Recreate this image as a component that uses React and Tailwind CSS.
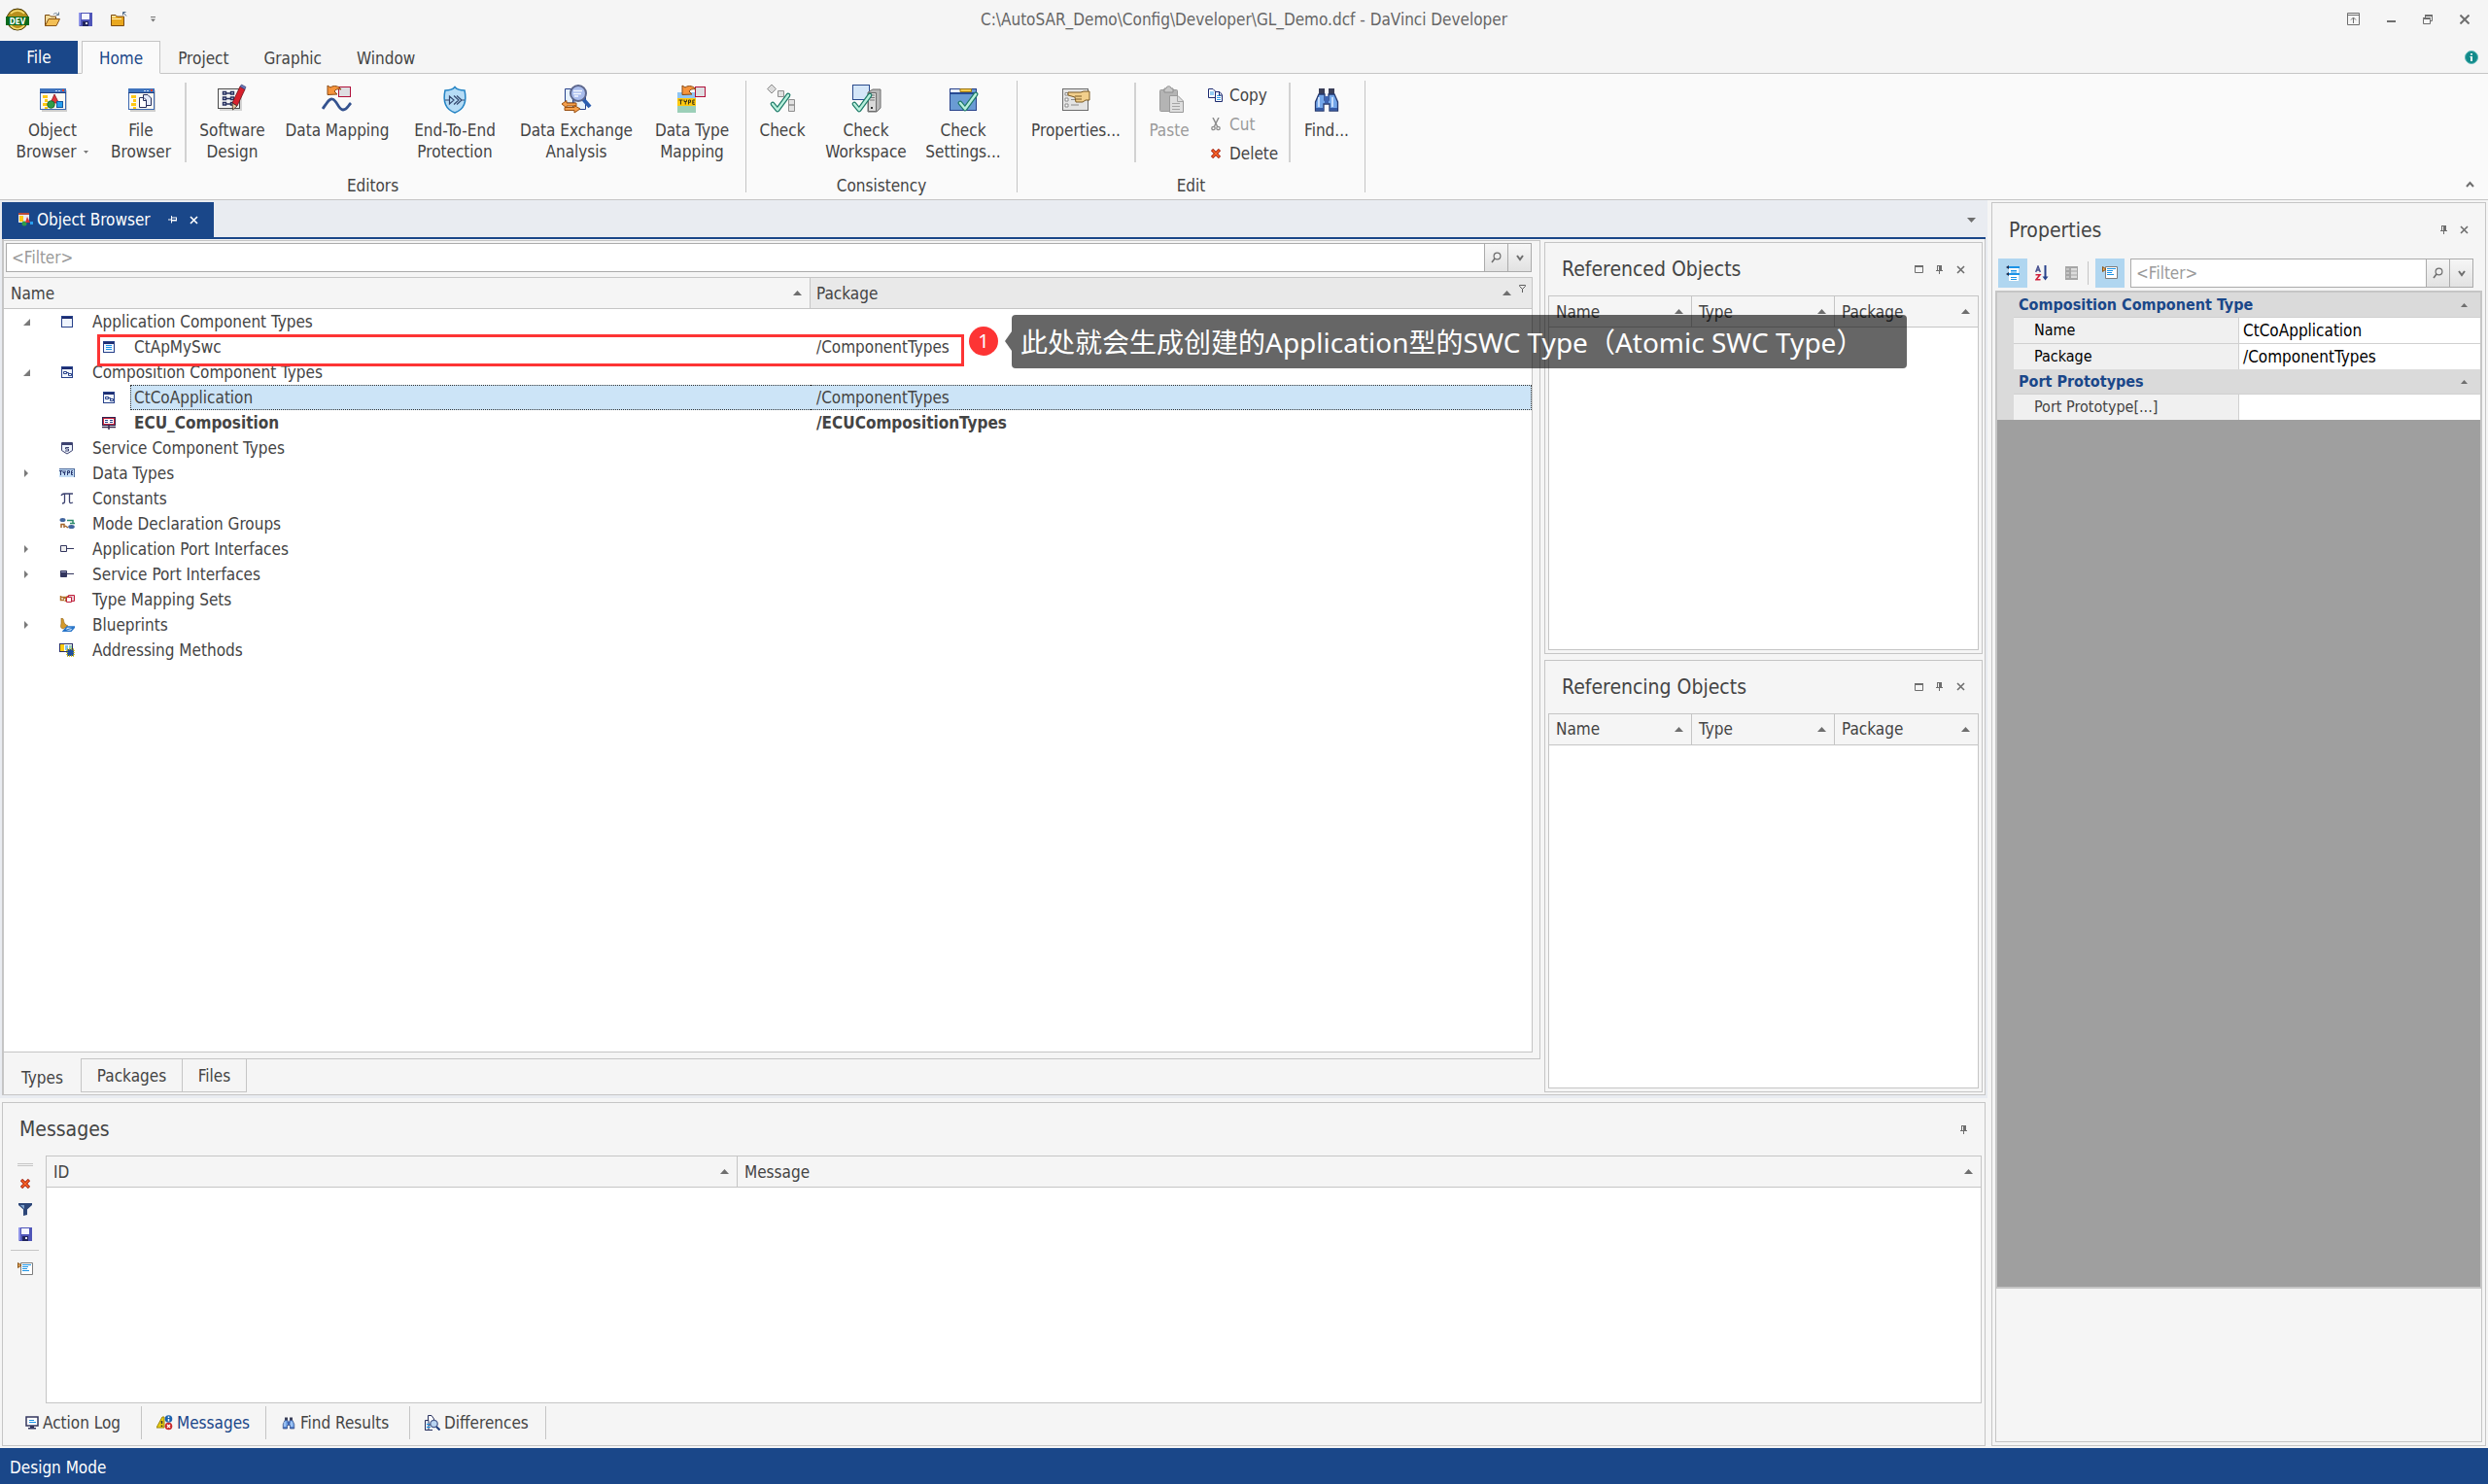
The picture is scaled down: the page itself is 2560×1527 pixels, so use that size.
import React, { useState } from 'react';

const RIBBON_TABS = ['Home', 'Project', 'Graphic', 'Window'];

const TREE = [
  { id: 'app', label: 'Application Component Types', icon: 'app', level: 0, state: 'open' },
  { id: 'swc', label: 'CtApMySwc', pkg: '/ComponentTypes', icon: 'swc', level: 1 },
  { id: 'comp', label: 'Composition Component Types', icon: 'comp', level: 0, state: 'open' },
  { id: 'ctco', label: 'CtCoApplication', pkg: '/ComponentTypes', icon: 'comp', level: 1 },
  { id: 'ecu', label: 'ECU_Composition', pkg: '/ECUCompositionTypes', icon: 'ecu', level: 1, bold: true },
  { id: 'svc', label: 'Service Component Types', icon: 'service', level: 0 },
  { id: 'data', label: 'Data Types', icon: 'type', level: 0, state: 'closed' },
  { id: 'const', label: 'Constants', icon: 'pi', level: 0 },
  { id: 'mode', label: 'Mode Declaration Groups', icon: 'mode', level: 0 },
  { id: 'aport', label: 'Application Port Interfaces', icon: 'portApp', level: 0, state: 'closed' },
  { id: 'sport', label: 'Service Port Interfaces', icon: 'portSvc', level: 0, state: 'closed' },
  { id: 'map', label: 'Type Mapping Sets', icon: 'mapping', level: 0 },
  { id: 'blue', label: 'Blueprints', icon: 'blueprint', level: 0, state: 'closed' },
  { id: 'addr', label: 'Addressing Methods', icon: 'address', level: 0 },
];

/* ---------- small glyphs ---------- */

const SortArrow = () => (
  <svg className="h-[5px] w-[9px] shrink-0" viewBox="0 0 9 5"><path d="M0 5L4.5 0L9 5Z" fill="#6e6e6e" /></svg>
);

const DownArrow = () => (
  <svg className="h-[5px] w-[9px] shrink-0" viewBox="0 0 9 5"><path d="M0 0L4.5 5L9 0Z" fill="#6e6e6e" /></svg>
);

const Pin = () => (
  <svg className="h-[9px] w-[8px]" viewBox="0 0 8 9" fill="#6e6e6e"><path d="M1 0H6V5H7V6H4V9H3V6H0V5H1ZM2 1V5H3V1Z" fillRule="evenodd" /></svg>
);

const Cross = ({ color = '#6e6e6e' }) => (
  <svg className="h-[9px] w-[9px]" viewBox="0 0 9 9"><path d="M1 1L8 8M8 1L1 8" stroke={color} strokeWidth="1.6" /></svg>
);

const Maximize = () => (
  <svg className="h-[8px] w-[9px]" viewBox="0 0 9 8"><path d="M.5 1V7.5H8.5V1" fill="none" stroke="#6e6e6e" /><path d="M0 0H9V2H0Z" fill="#6e6e6e" /></svg>
);

const Search = () => (
  <svg className="h-[12px] w-[11px]" viewBox="0 0 11 12" fill="none" stroke="#6e6e6e"><circle cx="6.5" cy="4.5" r="3.4" strokeWidth="1.2" /><path d="M4 7L1 11" strokeWidth="1.6" /></svg>
);

const Chevron = () => (
  <svg className="h-[7px] w-[8px]" viewBox="0 0 8 7"><path d="M1 1L4 5L7 1" fill="none" stroke="#6e6e6e" strokeWidth="2" /></svg>
);

/* ---------- 16px icons ---------- */

const Save = () => (
  <svg className="h-[14px] w-[14px]" viewBox="0 0 14 14">
    <path d="M0 0H14V14H1L0 13Z" fill="#4f55b8" /><path d="M0 0H2V13H0Z" fill="#8f94e8" />
    <path d="M3 1H11V7H3Z" fill="#f4f6ff" /><path d="M4 9H10V14H4Z" fill="#20245c" /><path d="M7 10H9V12H7Z" fill="#e8e8f4" />
  </svg>
);

const FolderOpen = () => (
  <svg className="h-[16px] w-[18px]" viewBox="0 0 18 16">
    <path d="M1.5 14.5V3.5H6L7.5 5H12.5V8" fill="#f4dc9a" stroke="#7a4a12" />
    <path d="M1.5 14.5L5 7.5H16.5L13 14.5Z" fill="#f3bf55" stroke="#8a5518" />
    <path d="M10 3C11 1 13 1 15 3M15.5 .5V3.5H12.5" fill="none" stroke="#6b8094" />
  </svg>
);

const FolderUp = () => (
  <svg className="h-[16px] w-[18px]" viewBox="0 0 18 16">
    <path d="M1.5 14.5V3.5H6L7.5 5H14.5V14.5Z" fill="#e9a81f" stroke="#7a4a12" />
    <path d="M2 7H12V8H2Z" fill="#fff0b8" /><path d="M2 4H6V6H2Z" fill="#f9e29a" />
    <path d="M13.5 .5H16.5M13.5 .5V3.5M14 1L17 4.5" fill="none" stroke="#4f6a88" />
  </svg>
);

const Copy = () => (
  <svg className="h-[14px] w-[16px]" viewBox="0 0 16 14">
    <path d="M.5 .5H5L7.5 3V9.5H.5Z" fill="#fff" stroke="#1c2a70" /><path d="M2 4H6M2 6H6" stroke="#2b9be8" />
    <path d="M7.5 3.5H12L14.5 6.5V13.5H7.5Z" fill="#fff" stroke="#1c2a70" /><path d="M9 7.500H13M9 9.500H13M9 11.500H13" stroke="#2b9be8" /><path d="M11.500 4V7H14" fill="none" stroke="#1c2a70" />
  </svg>
);

const Cut = () => (
  <svg className="h-[14px] w-[10px]" viewBox="0 0 10 14" fill="none" stroke="#8c8c8c">
    <path d="M2 0L6.500 9M8 0L3.500 9" strokeWidth="1.5" /><circle cx="2.500" cy="11" r="1.700" strokeWidth="1.300" /><circle cx="7.500" cy="11" r="1.700" strokeWidth="1.300" />
  </svg>
);

const Delete = () => (
  <svg className="h-[10px] w-[10px]" viewBox="0 0 10 10">
    <path d="M1 1L9 9M9 1L1 9" stroke="#a01808" strokeWidth="3.200" /><path d="M1.500 1.500L8.500 8.500M8.500 1.500L1.500 8.500" stroke="#ff6a2a" strokeWidth="1.500" />
  </svg>
);

const Funnel = () => (
  <svg className="h-[13px] w-[14px]" viewBox="0 0 14 13"><path d="M0 0H14V2L9 6.500V12L5 13V6.500L0 2Z" fill="#2c4678" /><path d="M2 2H6L6 6Z" fill="#7fa3cf" /></svg>
);

const ListFilter = () => (
  <svg className="h-[14px] w-[16px]" viewBox="0 0 16 14">
    <path d="M3.500 .500H15.500V12.500H3.500Z" fill="#fff" stroke="#7d7d7d" />
    <path d="M5 2.500H14M5 4.500H11M5 6.500H10M5 8.500H12" stroke="#1b93e6" />
    <path d="M.500 .500L4 3L.500 5.500Z" fill="#e6a65a" stroke="#8a5518" />
  </svg>
);

const BlueWindow = ({ children }) => (
  <>
    <rect x=".5" y=".5" width="11" height="11" fill="#eef4fd" stroke="#27418a" />
    <path d="M1 1H11V3H1Z" fill="#1d2c70" />
    {children}
  </>
);

function TreeIcon({ name }) {
  const frame = (children) => <svg className="h-[14px] w-[16px]" viewBox="-2 -1 16 14">{children}</svg>;
  switch (name) {
    case 'app':
      return frame(<BlueWindow />);
    case 'swc':
      return frame(<BlueWindow><path d="M3 4.500H9M3 6.500H9M3 8.500H9" stroke="#1b93e6" /></BlueWindow>);
    case 'comp':
      return frame(<BlueWindow><path d="M2.500 5.500H5.500V7.500H2.500ZM7.500 7.500H10.500V9.500H7.500ZM5.500 6.500H7.500V8" fill="#fff" stroke="#27418a" /></BlueWindow>);
    case 'ecu':
      return frame(
        <>
          <rect x="-.5" y=".5" width="13" height="8" fill="#fff" stroke="#2e2450" />
          <rect x=".5" y="1.500" width="11" height="6" fill="#fff" stroke="#c8243c" />
          <path d="M2 3.500H5M7 3.500H10M2 5.500H5M7 5.500H10" stroke="#27418a" />
          <path d="M-1 10.500H13M6 9V13" stroke="#3a2a4c" strokeWidth="1.500" />
        </>
      );
    case 'service':
      return frame(
        <>
          <path d="M.5 .5H11.500V8.500L6 12L.5 8.500Z" fill="#eef4fd" stroke="#3c4270" /><path d="M1 1H11V3H1Z" fill="#3c4270" />
          <path d="M8 5.500H4.500V7H7.500V9H4" fill="none" stroke="#3c4270" />
        </>
      );
    case 'type':
      return frame(
        <>
          <rect x="-2" y="1" width="16" height="9" fill="#c3dcf5" /><path d="M13.500 1V10M-2 1.500H14" stroke="#4c6a9c" />
          <path d="M-2 3.500H1M-.5 3V8M2 3V5.500H4V3M3.500 5V8M6.500 8V3.500H8.500V5.500H6.500M12 3.500H10.500V7.500H12M10 5.500H12" fill="none" stroke="#27356e" />
        </>
      );
    case 'pi':
      return frame(<path d="M0 3C1 1 2 1 3 1H12M3.500 1V9C3.500 11 2 11 1 11M8.500 1V9C8.500 11 10 11 12 10" fill="none" stroke="#3c4270" strokeWidth="1.300" />);
    case 'mode':
      return frame(
        <>
          <ellipse cx="1.500" cy="2" rx="3" ry="2" fill="#42659e" /><ellipse cx="10.500" cy="9" rx="3.300" ry="2" fill="#42659e" />
          <path d="M6 2.500H12V5M9 5.500H14" fill="none" stroke="#2c8a6a" strokeWidth="1.500" />
          <path d="M0 10V6.500H3V10M4 8L7 10" fill="none" stroke="#a4642a" strokeWidth="1.500" />
        </>
      );
    case 'portApp':
      return frame(<path d="M-.5 2.500H5.500V8.500H-.5ZM6 5.500H13" fill="#eee" stroke="#33365e" />);
    case 'portSvc':
      return frame(<><path d="M-.5 2.500H5.500V8.500H-.5ZM6 5.500H13" fill="#33365e" stroke="#33365e" /><path d="M0 3.500H5" stroke="#9a9cc0" /></>);
    case 'mapping':
      return frame(
        <>
          <path d="M-.5 2V6.500H3M0 3.500H6M2 5L6 3L4 8" fill="none" stroke="#b0702a" strokeWidth="1.500" />
          <path d="M7.500 1.500H13.500V7.500H7.500Z" fill="#e8c8d0" stroke="#c0203c" /><path d="M5.500 3.500H10.500V8.500H5.500Z" fill="#fff" stroke="#c0203c" />
        </>
      );
    case 'blueprint':
      return frame(
        <>
          <path d="M0 -1C4 -1 1 3 5 6L7 7L2 10C-2 9 0 6 0 4Z" fill="#d49a2c" stroke="#8a5a14" strokeWidth=".6" />
          <path d="M2 12.500L6 8H14L10 12.500ZM4 11.500L12 9" fill="#e0eefc" stroke="#2573c8" strokeWidth="1.300" />
        </>
      );
    default:
      return frame(
        <>
          <rect x="-1.500" y="-.5" width="13" height="8" fill="#fff" stroke="#2a2f66" /><rect x="-1" y="0" width="4" height="7" fill="#ffcc10" />
          <rect x="4" y="1" width="3" height="5" fill="#7cc0f0" /><rect x="8" y="1" width="3" height="5" fill="#9ccfb4" />
          <rect x="6" y="5" width="7" height="7" fill="#1e4ea0" stroke="#c8b400" strokeWidth="1.500" strokeDasharray="1 1" />
        </>
      );
  }
}

/* ---------- ribbon icons, 32px box ---------- */

const Icon32 = ({ children, viewBox = '0 0 32 32' }) => (
  <svg className="h-8 w-8 shrink-0" viewBox={viewBox}>{children}</svg>
);

const CheckMark = ({ x = 0, y = 0 }) => (
  <g transform={`translate(${x} ${y})`} fill="none" strokeLinecap="round" strokeLinejoin="round">
    <path d="M2 11L7 17L18 2" stroke="#1e7a68" strokeWidth="4.800" />
    <path d="M2 11L7 17L18 2" stroke="#b9f0dc" strokeWidth="2.400" />
  </g>
);

const WindowFrame = ({ children }) => (
  <Icon32>
    <rect x="5" y="7" width="26" height="22" fill="#000" opacity=".18" />
    <rect x="3.500" y="5.500" width="26" height="21" fill="#fbfaf4" stroke="#3f6ab0" />
    <path d="M3 5H30V10H3Z" fill="#3f73bd" /><path d="M3 9H30V10H3Z" fill="#1f3f80" />
    <path d="M19 7H21V8H19ZM22 7H24V8H22Z" fill="#cfe0f8" /><path d="M26 6H28V8H26Z" fill="#f04028" />
    <path d="M6 12H11V15H6ZM8 16H11V19H8ZM6 20H11V23H6ZM8 24H11V26H8Z" fill="#ffc814" />
    {children}
  </Icon32>
);

const OrangeArrow = ({ x = 0, y = 0 }) => (
  <path transform={`translate(${x} ${y})`} d="M1 1L4 3C8 0 13 2 15 5C12 4 9 5 8 7L11 10L1 10.500Z" fill="#f6943c" stroke="#8a4a14" />
);

const ObjectBrowserIcon = () => (
  <WindowFrame>
    <path d="M18 11L22.500 20H14Z" fill="#e0363c" stroke="#8a1820" strokeWidth=".8" /><circle cx="14.500" cy="21.500" r="3.800" fill="#2f9c48" stroke="#145c28" strokeWidth=".8" />
    <rect x="20.500" y="18.500" width="6" height="6" fill="#28a0f0" stroke="#1458a0" />
  </WindowFrame>
);

const FileBrowserIcon = () => (
  <WindowFrame>
    <path d="M18.500 11.500H23L26.500 15V22.500H18.500Z" fill="#e6ecfa" stroke="#27305e" />
    <path d="M14.500 14.500H19L21.500 17V24.500H14.500Z" fill="#fff" stroke="#27305e" /><path d="M18.500 15V17.500H21" fill="none" stroke="#27305e" />
  </WindowFrame>
);

const SoftwareIcon = () => (
  <Icon32>
    <rect x="3" y="7" width="23" height="21" fill="#000" opacity=".15" />
    <rect x="1.500" y="5.500" width="22" height="20" fill="#f4f4f4" stroke="#4c4c4c" />
    <path d="M6.500 8.500H9.500V11H6.500ZM14.500 8.500H17.500V11H14.500ZM6.500 14H9.500V16.500H6.500ZM14.500 14H17.500V16.500H14.500ZM6.500 19.500H9.500V22H6.500ZM14.500 19.500H17.500V22H14.500ZM10 10H14M10 15.500H14M10 21H14" fill="#dfe4f4" stroke="#27305e" strokeWidth="1.400" />
    <path d="M24 3L29 6L21 23L16 20Z" fill="#d8202c" stroke="#6c1018" strokeWidth=".8" /><path d="M24 3L25.500 1L30 3.500L29 6Z" fill="#6a78b8" stroke="#30386c" strokeWidth=".6" />
    <path d="M16 20L21 23L16.500 27Z" fill="#e8c8a0" stroke="#3a2a20" strokeWidth=".8" />
  </Icon32>
);

const DataMappingIcon = () => (
  <Icon32>
    <rect x="17.500" y="3.500" width="12" height="10" fill="#dedee2" stroke="#b0103a" /><OrangeArrow x="5" y="1" />
    <path d="M1 26C6 19 8 15 11 16C16 17 17 27 22 27C26 27 27 23 30 20" fill="none" stroke="#34528f" strokeWidth="2.800" />
  </Icon32>
);

const ShieldIcon = () => (
  <Icon32>
    <path d="M16 3.500C18 6 22 7 26 7C28 16 27 26 16 30C5 26 4 16 6 7C10 7 14 6 16 3.500Z" fill="#b6dcf6" stroke="#2584c4" strokeWidth="1.500" />
    <path d="M6 17H10M10.500 13V21L15 17ZM15 12.500L20 17L15 21.500M18 12.500L23 17L18 21.500M22 17H26" fill="none" stroke="#33476e" strokeWidth="1.200" />
  </Icon32>
);

const ExchangeIcon = () => (
  <Icon32>
    <path d="M4.500 5.500H14V20H4.500ZM12.500 12.500H25.500V26.500H12.500Z" fill="#e6f1fc" stroke="#27418a" />
    <path d="M23 16L30 24" stroke="#2a5cb0" strokeWidth="4" />
    <circle cx="18" cy="10" r="8" fill="#a9bcec" stroke="#5c668c" strokeWidth="2" /><path d="M13 7.500H22M13 10.500H21M14 13H18" stroke="#f4f8ff" strokeWidth="1.400" />
    <path d="M1 21L6 17.500V20H16V23H6V25ZM20 26L14 30V27.500H4V24.500H14V22.500Z" fill="#f6a04c" stroke="#9a5010" />
  </Icon32>
);

const TypeMappingIcon = () => (
  <Icon32>
    <rect x="1" y="9" width="19" height="7" fill="#8fc6f4" /><rect x="1" y="15" width="19" height="8" fill="#ffc810" /><rect x="1" y="23" width="19" height="7" fill="#9ccfb8" />
    <path d="M2.500 17H6.500M4.500 17V21.500M8 16.500V18.500H10.500V16.500M9.300 18.500V21.500M12.500 21.500V17H14.500V19.300H12.500M19 17H16.800V21.300H19M16.800 19.200H18.500" fill="none" stroke="#3a3418" />
    <rect x="19.500" y="3.500" width="10" height="10" fill="#dedee2" stroke="#b0103a" /><OrangeArrow x="5" y="1" />
  </Icon32>
);

const CheckIcon = () => (
  <Icon32>
    <path d="M5 1L9.500 5.500L5 10L.5 5.500Z" fill="#dcdcdc" stroke="#8e8e8e" /><path d="M11.500 7.500H17.500V13.500H11.500ZM22.500 16.500H28.500V22H22.500ZM22.500 22H28.500V28.500H22.500Z" fill="#e2e2e2" stroke="#8e8e8e" />
    <CheckMark x={4} y={10} />
  </Icon32>
);

const CheckWorkspaceIcon = () => (
  <Icon32>
    <rect x="2.500" y="1.500" width="17" height="15" fill="#d4e6f8" stroke="#2a4a8c" /><path d="M18 9L23 6H31V25L27 29H18Z" fill="#b8b8b8" stroke="#6c6c6c" />
    <path d="M18.500 9.500H26.500V28.500H18.500Z" fill="#dadada" stroke="#6c6c6c" /><path d="M20 12H25M20 14.500H25M20 17H25" stroke="#777" /><path d="M21 24H23V26H21Z" fill="#333" />
    <CheckMark x={2} y={10} />
  </Icon32>
);

const CheckSettingsIcon = () => (
  <Icon32>
    <rect x="2.500" y="5.500" width="27" height="22" fill="#6a9bd4" stroke="#27418a" /><path d="M3 6H13V9H3Z" fill="#e8eef8" /><path d="M13 5.500H24.500V8.500H13Z" fill="#f6ca4c" stroke="#9a7414" />
    <path d="M3 9H29V11H3Z" fill="#274a94" /><CheckMark x={11} y={9} />
  </Icon32>
);

const PropertiesIcon = () => (
  <Icon32>
    <rect x="2.500" y="5.500" width="26" height="22" fill="#e4e4e4" stroke="#6c6c6c" /><path d="M5 9.500H8V12H5ZM5 15H8V18H5ZM5 21H8V24H5Z" fill="#fff" stroke="#8a8a8a" />
    <path d="M11 22H19M11 16.500H15" stroke="#8a8a8a" />
    <path d="M8 9H21L24 8H30V17H26L23 19H16L15 14L8 12Z" fill="#f2cf8c" stroke="#7a5a24" /><path d="M15 13H22M16 16H22" stroke="#7a5a24" />
  </Icon32>
);

const PasteIcon = () => (
  <Icon32 viewBox="-2 0 32 32">
    <rect x="4.500" y="6.500" width="18" height="22" rx="1" fill="#b4b4b4" stroke="#9a9a9a" /><path d="M9 9V5H11C11 2 16 2 16 5H18V9Z" fill="#c8c8c8" stroke="#8e8e8e" />
    <path d="M14.500 12.500H23L28.500 18V29.500H14.500Z" fill="#dedede" stroke="#9a9a9a" /><path d="M17 20.500H25M17 23.500H25M17 26.500H25M22.500 13V18.500H28" fill="none" stroke="#a4a4a4" />
  </Icon32>
);

const Binoculars = ({ className = 'h-8 w-8' }) => (
  <svg className={className} viewBox="0 0 32 32">
    <path d="M8 5H14V11H8ZM18 5H24V11H18Z" fill="#3a3f58" /><path d="M8 11H14V17H18V11H24L27.500 19V28H19V21H13V28H4.500V19Z" fill="#74a7ea" stroke="#25396e" strokeWidth="1.300" />
    <path d="M14 13H18V20H14Z" fill="#3d63b0" /><path d="M5 25H13V27.500H5ZM19 25H27V27.500H19Z" fill="#355aa6" /><path d="M8 14V24M22 14V24" stroke="#cfe4ff" strokeWidth="1.800" />
  </svg>
);

/* ---------- shared pieces ---------- */

function RibbonButton({ icon, lines, width, disabled, drop }) {
  return (
    <button disabled={disabled} className={`flex flex-col items-center pt-[3px] leading-[22px] ${width} ${disabled ? 'text-[#9a9a9a]' : ''}`}>
      {icon}
      <span className="mt-[5px] whitespace-nowrap">{lines[0]}</span>
      {lines[1] && (
        <span className="flex items-center gap-2 whitespace-nowrap">
          {lines[1]}
          {drop && <svg className="h-[3px] w-[5px]" viewBox="0 0 5 3"><path d="M0 0H5L2.500 3Z" fill="#777" /></svg>}
        </span>
      )}
    </button>
  );
}

function RibbonGroup({ title, width, children }) {
  return (
    <section className={`my-[7px] flex flex-col border-r border-[#c5c5c5] ${width}`}>
      <div className="flex h-[84px]">{children}</div>
      <h2 className="pt-[13px] text-center leading-[22px]">{title}</h2>
    </section>
  );
}

const RibbonRule = () => <div className="mt-[2px] w-[2px] shrink-0 bg-[#d2d2d2]" />;

function SmallButton({ icon, children, disabled }) {
  return (
    <button disabled={disabled} className={`flex h-[30px] shrink-0 items-center gap-[5px] ${disabled ? 'text-[#9a9a9a]' : ''}`}>
      <span className="flex w-[18px] justify-center">{icon}</span>
      {children}
    </button>
  );
}

function FilterBox({ label }) {
  return (
    <div className="flex h-[30px] min-w-0 flex-1 border border-[#ababab] bg-white">
      <input aria-label={label} placeholder="<Filter>" className="min-w-0 flex-1 px-[5px] outline-none placeholder:text-[#9a9a9a]" />
      <button aria-label="Search" className="flex w-6 items-center justify-center border-l border-[#ababab] bg-linear-to-b from-[#f6f6f6] to-[#e2e2e2]"><Search /></button>
      <button aria-label="Filter history" className="flex w-6 items-center justify-center border-l border-[#ababab] bg-linear-to-b from-[#f6f6f6] to-[#e2e2e2]"><Chevron /></button>
    </div>
  );
}

function ColumnHead({ children, className = '' }) {
  return (
    <th className={`h-8 border-b border-[#c5c5c5] p-0 text-left font-normal ${className}`}>
      <span className="flex items-center justify-between pr-2 pl-[7px]">{children}<SortArrow /></span>
    </th>
  );
}

function ReferencePanel({ title, className }) {
  return (
    <section className={`flex flex-col border border-[#c5c5c5] px-[3px] pb-[3px] ${className}`}>
      <header className="flex h-[54px] items-center justify-between pr-[14px] pl-[14px]">
        <h2 className="text-[21px] leading-[26px]">{title}</h2>
        <div className="flex items-center gap-[13px]">
          <button aria-label="Maximize"><Maximize /></button>
          <button aria-label="Pin"><Pin /></button>
          <button aria-label="Close"><Cross /></button>
        </div>
      </header>
      <div className="flex-1 border border-[#c5c5c5] bg-white">
        <table className="w-full table-fixed border-separate border-spacing-0">
          <thead>
            <tr className="bg-[#f5f5f5]">
              <ColumnHead className="border-r">Name</ColumnHead>
              <ColumnHead className="border-r">Type</ColumnHead>
              <ColumnHead>Package</ColumnHead>
            </tr>
          </thead>
        </table>
      </div>
    </section>
  );
}

function Expander({ state }) {
  if (state === 'open') return <svg className="h-[7px] w-[7px]" viewBox="0 0 7 7"><path d="M7 0V7H0Z" fill="#7a7a7a" /></svg>;
  if (state === 'closed') return <svg className="h-[8px] w-[4px]" viewBox="0 0 4 8"><path d="M0 0L4 4L0 8Z" fill="#7a7a7a" /></svg>;
  return null;
}

function TreeRow({ node, selected, onSelect }) {
  const mark = selected ? 'border-dotted border-[#333] bg-[#cce4f7]' : 'border-transparent';
  return (
    <tr onClick={onSelect} className={node.bold ? 'font-bold' : ''}>
      <td className="h-[26px] p-0">
        <div className="flex h-[26px] items-center">
          <span className="flex w-[57px] justify-center pr-[11px]"><Expander state={node.state} /></span>
          {node.level === 1 && <span className="w-[43px]" />}
          <span className="flex w-[30px] shrink-0"><TreeIcon name={node.icon} /></span>
          <span className={`flex h-[26px] flex-1 items-center whitespace-nowrap border-y border-l pl-[3px] ${mark}`}>{node.label}</span>
        </div>
      </td>
      <td className="h-[26px] p-0">
        <div className={`flex h-[26px] items-center border-y border-r pl-[6px] ${mark}`}>{node.pkg}</div>
      </td>
    </tr>
  );
}

/* ---------- page regions ---------- */

function TitleBar() {
  return (
    <header className="grid h-[42px] grid-cols-[1fr_auto_1fr] items-center pb-[3px]">
      <div className="flex items-center pl-[6px]">
        <svg className="h-6 w-6" viewBox="0 0 24 24">
          <circle cx="12" cy="12" r="11" fill="#b8901c" stroke="#4c3c08" /><path d="M5 6C9 2 15 2 19 6M5 18C9 23 15 23 19 18" fill="none" stroke="#f4dc70" strokeWidth="1.500" />
          <path d="M0 9H24V18H0Z" fill="#0b6a1c" /><text x="12" y="16.500" textAnchor="middle" fontSize="8" fontWeight="700" fill="#fff">DEV</text>
        </svg>
        <button aria-label="Open" className="ml-[15px]"><FolderOpen /></button>
        <button aria-label="Save" className="ml-[18px]"><Save /></button>
        <button aria-label="Close project" className="ml-[18px]"><FolderUp /></button>
        <button aria-label="Customize toolbar" className="ml-6">
          <svg className="h-[6px] w-[5px]" viewBox="0 0 5 6"><path d="M0 0H5V1H0ZM0 2.500H5L2.500 5.500Z" fill="#777" /></svg>
        </button>
      </div>
      <h1 className="text-[#666]">C:\AutoSAR_Demo\Config\Developer\GL_Demo.dcf - DaVinci Developer</h1>
      <div className="flex items-center justify-end gap-[28px] pr-[19px]">
        <button aria-label="Ribbon display"><svg className="h-[13px] w-[13px]" viewBox="0 0 13 13"><path d="M.5 .5H12.500V12.500H.5ZM0 2.500H13M6.500 11V5M4 7.500L6.500 5L9 7.500" fill="none" stroke="#6e6e6e" /></svg></button>
        <button aria-label="Minimize"><svg className="h-[10px] w-[9px]" viewBox="0 0 9 10"><path d="M0 6H9V8H0Z" fill="#6e6e6e" /></svg></button>
        <button aria-label="Restore"><svg className="h-[10px] w-[10px]" viewBox="0 0 10 10"><path d="M.5 4.500H7.500V9.500H.5ZM0 3.500H8M2.500 3V1M2 .5H10M2 1.500H10M9.500 1V6.500H8" fill="none" stroke="#6e6e6e" /></svg></button>
        <button aria-label="Close window"><svg className="h-[10px] w-[10px]" viewBox="0 0 10 10"><path d="M.5 .5L9.500 9.500M9.500 .5L.5 9.500" stroke="#6e6e6e" strokeWidth="2" /></svg></button>
      </div>
    </header>
  );
}

function Ribbon() {
  const [tab, setTab] = useState('Home');
  return (
    <>
      <nav className="flex h-[34px] border-b border-[#c5c5c5]">
        <button className="-mb-px w-20 bg-[#1a4789] text-white">File</button>
        <div className="flex flex-1 pl-1">
          {RIBBON_TABS.map((t) => (
            <button
              key={t}
              onClick={() => setTab(t)}
              className={`-mb-px border px-[17px] pt-[2px] ${t === tab ? 'border-[#c5c5c5] border-b-[#fafafa] bg-[#fafafa] text-[#1a4789]' : 'border-transparent'}`}
            >
              {t}
            </button>
          ))}
        </div>
        <button aria-label="About" className="mr-[10px]">
          <svg className="h-[14px] w-[14px]" viewBox="0 0 14 14"><circle cx="7" cy="7" r="6.500" fill="#128a8a" stroke="#5cb8b8" /><path d="M6 3H8V4.500H6ZM5.500 6H8V11H6V7H5.500Z" fill="#fff" /></svg>
        </button>
      </nav>
      <div className="flex h-[130px] border-b border-[#c5c5c5] bg-[#fafafa]">
        <RibbonGroup title="Editors" width="w-[768px]">
          <RibbonButton icon={<ObjectBrowserIcon />} lines={['Object', 'Browser']} width="w-[92px] ml-2" drop />
          <RibbonButton icon={<FileBrowserIcon />} lines={['File', 'Browser']} width="w-[90px]" />
          <RibbonRule />
          <RibbonButton icon={<SoftwareIcon />} lines={['Software', 'Design']} width="w-[94px]" />
          <RibbonButton icon={<DataMappingIcon />} lines={['Data Mapping']} width="w-[122px]" />
          <RibbonButton icon={<ShieldIcon />} lines={['End-To-End', 'Protection']} width="w-[120px]" />
          <RibbonButton icon={<ExchangeIcon />} lines={['Data Exchange', 'Analysis']} width="w-[130px]" />
          <RibbonButton icon={<TypeMappingIcon />} lines={['Data Type', 'Mapping']} width="w-[108px]" />
        </RibbonGroup>
        <RibbonGroup title="Consistency" width="w-[279px]">
          <RibbonButton icon={<CheckIcon />} lines={['Check']} width="w-[74px]" />
          <RibbonButton icon={<CheckWorkspaceIcon />} lines={['Check', 'Workspace']} width="w-[98px]" />
          <RibbonButton icon={<CheckSettingsIcon />} lines={['Check', 'Settings...']} width="w-[102px]" />
        </RibbonGroup>
        <RibbonGroup title="Edit" width="w-[358px]">
          <RibbonButton icon={<PropertiesIcon />} lines={['Properties...']} width="w-[120px]" />
          <RibbonRule />
          <RibbonButton icon={<PasteIcon />} lines={['Paste']} width="w-[68px]" disabled />
          <div className="flex w-[89px] flex-col pl-[5px]">
            <SmallButton icon={<Copy />}>Copy</SmallButton>
            <SmallButton icon={<Cut />} disabled>Cut</SmallButton>
            <SmallButton icon={<Delete />}>Delete</SmallButton>
          </div>
          <RibbonRule />
          <RibbonButton icon={<Binoculars />} lines={['Find...']} width="w-[74px]" />
        </RibbonGroup>
        <button aria-label="Collapse ribbon" className="mr-[14px] mb-[12px] ml-auto self-end">
          <svg className="h-[7px] w-[9px]" viewBox="0 0 9 7"><path d="M1 6L4.500 2L8 6" fill="none" stroke="#6e6e6e" strokeWidth="2" /></svg>
        </button>
      </div>
    </>
  );
}

function ObjectTree() {
  const [selected, setSelected] = useState('ctco');
  return (
    <section className="flex min-w-0 flex-1 flex-col">
      <div className="flex flex-1 flex-col border-t border-r border-[#c5c5c5] pr-[7px]">
        <div className="flex pt-[2px] pr-px pl-[2px]"><FilterBox label="Filter objects" /></div>
        <div className="mt-[5px] mb-[6px] flex-1 border-t border-r border-b border-[#c5c5c5] bg-white">
          <table className="w-full table-fixed border-separate border-spacing-0">
            <colgroup><col className="w-[830px]" /><col /></colgroup>
            <thead>
              <tr className="bg-[#f5f5f5]">
                <ColumnHead className="border-r">Name</ColumnHead>
                <th className="h-8 border-b border-[#c5c5c5] bg-[#e9e9e9] p-0 text-left font-normal">
                  <span className="flex items-center pr-[6px] pl-[6px]">
                    <span className="flex-1">Package</span>
                    <SortArrow />
                    <svg className="mb-[10px] ml-2 h-[8px] w-[7px]" viewBox="0 0 7 8"><path d="M.5 .5H6.500V1.500L3.500 4.500L.5 1.500ZM3.500 4V8" fill="none" stroke="#5e5e5e" /></svg>
                  </span>
                </th>
              </tr>
            </thead>
            <tbody>
              {TREE.map((node) => (
                <TreeRow key={node.id} node={node} selected={selected === node.id} onSelect={() => setSelected(node.id)} />
              ))}
            </tbody>
          </table>
        </div>
      </div>
      <div className="flex h-[37px]">
        <button className="w-[79px] pt-[2px]">Types</button>
        <div className="flex flex-1 items-start border-t border-[#c5c5c5]">
          <button className="h-[34px] w-[105px] border-x border-b border-[#c5c5c5]">Packages</button>
          <button className="h-[34px] w-[66px] border-r border-b border-[#c5c5c5]">Files</button>
        </div>
      </div>
    </section>
  );
}

/* Numbered step marker drawn over the tree */
function StepNote() {
  return (
    <div className="pointer-events-none absolute top-[118px] left-[100px] z-10 flex items-start">
      <div className="mt-5 h-[33px] w-[892px] border-3 border-[#fd3434]" />
      <div className="mt-3 ml-[5px] flex h-[30px] w-[30px] items-center justify-center rounded-full bg-[#fd3434] font-['Noto_Sans',sans-serif] text-[20px] text-white">1</div>
      <svg className="mt-[17px] ml-[7px] h-[20px] w-[7px]" viewBox="0 0 7 20"><path d="M7 0V20L0 10Z" fill="#000" opacity=".6" /></svg>
      <p className="flex h-[55px] w-[921px] items-center rounded-sm bg-black/60 pl-[9px] font-['Noto_Sans','Noto_Sans_CJK_SC',sans-serif] text-[28px] whitespace-nowrap text-white">
        此处就会生成创建的Application型的SWC Type（Atomic SWC Type）
      </p>
    </div>
  );
}

function Document() {
  return (
    <div className="relative flex flex-1 flex-col bg-[#e9ecf1] pt-[2px] pr-[2px] pb-[3px] pl-[2px]">
      <div className="flex h-[38px] items-stretch justify-between border-b-2 border-[#1a4789]">
        <div className="flex w-[218px] items-center bg-[#1a4789] pl-[17px] text-white">
          <svg className="h-[14px] w-[16px]" viewBox="0 0 16 14">
            <rect width="11" height="10" fill="#e8e8f0" /><path d="M0 0H11V2H0Z" fill="#b84838" /><path d="M1 3H5V9H1Z" fill="#ffc814" />
            <circle cx="6" cy="11" r="2.500" fill="#2f9c48" /><path d="M9 4L12 10H7Z" fill="#d83038" /><rect x="12" y="9" width="3" height="3" fill="#28a0f0" />
          </svg>
          <span className="ml-[3px] flex-1 whitespace-nowrap">Object Browser</span>
          <button aria-label="Pin tab" className="mr-[13px]"><svg className="h-[8px] w-[9px]" viewBox="0 0 9 8"><path d="M0 3.500H3V0H4V1.500H9V5.500H4V7.500H3V4.500H0ZM4 2.500V4H8V2.500Z" fill="#fff" fillRule="evenodd" /></svg></button>
          <button aria-label="Close tab" className="mr-4"><Cross color="#fff" /></button>
        </div>
        <button aria-label="Open documents" className="mr-[10px]"><DownArrow /></button>
      </div>
      <div className="flex flex-1 border-r border-b border-l-2 border-[#c5c5c5] bg-[#f5f5f5] pt-px">
        <ObjectTree />
        <div className="flex w-[457px] flex-col gap-[6px] pt-[2px] pr-[2px] pb-[2px] pl-1">
          <ReferencePanel title="Referenced Objects" className="flex-[424_1_0%]" />
          <ReferencePanel title="Referencing Objects" className="flex-[446_1_0%]" />
        </div>
      </div>
      <StepNote />
    </div>
  );
}

const LogIcon = () => (
  <svg className="h-[14px] w-[14px]" viewBox="0 0 14 14"><rect x="1" y="1" width="12" height="9" fill="#fff" stroke="#33365e" strokeWidth="1.500" /><path d="M4 4.500H9M4 6.500H11" stroke="#1b93e6" /><path d="M5 10H9V12H5ZM3 12H11V13.500H3Z" fill="#33365e" /></svg>
);

const MessagesIcon = () => (
  <svg className="h-[16px] w-[17px]" viewBox="0 0 17 16"><path d="M6 2L8 2L8 13H0Z" fill="#e8cc10" stroke="#9a8410" /><path d="M5.500 6V9M5.500 10.500V12" stroke="#333" strokeWidth="1.500" /><circle cx="12.500" cy="4" r="3.800" fill="#1b62b0" /><path d="M12.500 1.500V3M12.500 4V6.500" stroke="#fff" strokeWidth="1.500" /><circle cx="12.500" cy="11.500" r="3.800" fill="#c8282c" /><path d="M11 10L14 13M14 10L11 13" stroke="#fff" strokeWidth="1.300" /></svg>
);

const DiffIcon = () => (
  <svg className="h-[16px] w-[16px]" viewBox="0 0 16 16"><path d="M3.500 .5H7L9.500 4V10H3.500Z" fill="#fff" stroke="#27305e" /><path d="M.5 5.500H4V15.500H.5ZM.5 15.500H8" fill="#e6f1fc" stroke="#27305e" /><path d="M2 9.500H6M2 12.500H6" stroke="#1b93e6" /><circle cx="9.500" cy="9" r="3.700" fill="#b9d4f2" stroke="#4c5c8c" strokeWidth="1.300" /><path d="M12 12L15.500 15.500" stroke="#1e3c7c" strokeWidth="2" /></svg>
);

function Messages() {
  const [tab, setTab] = useState('Messages');
  const tabs = [
    { name: 'Action Log', icon: <LogIcon />, width: 'w-[126px]' },
    { name: 'Messages', icon: <MessagesIcon />, width: 'w-[128px]' },
    { name: 'Find Results', icon: <Binoculars className="h-[16px] w-[16px]" />, width: 'w-[148px]' },
    { name: 'Differences', icon: <DiffIcon />, width: 'w-[140px]' },
  ];
  return (
    <section className="mt-1 mr-[2px] mb-[2px] ml-[2px] flex h-[354px] flex-col border border-[#c5c5c5]">
      <header className="flex h-[54px] items-center justify-between pr-[17px] pl-[17px]">
        <h2 className="text-[21px] leading-[26px]">Messages</h2>
        <button aria-label="Pin"><Pin /></button>
      </header>
      <div className="flex flex-1 pr-[3px]">
        <div className="flex w-11 flex-col items-center pt-[8px] pl-px">
          <div className="h-[3px] w-4 border-y border-[#c5c5c5]" />
          <button aria-label="Delete message" className="mt-[13px]"><Delete /></button>
          <button aria-label="Filter messages" className="mt-[15px]"><Funnel /></button>
          <button aria-label="Save messages" className="mt-3"><Save /></button>
          <div className="mt-[9px] h-px w-[29px] bg-[#c5c5c5]" />
          <button aria-label="Show filter row" className="mt-3"><ListFilter /></button>
        </div>
        <div className="flex-1 border border-[#c5c5c5] bg-white">
          <table className="w-full table-fixed border-separate border-spacing-0">
            <colgroup><col className="w-[711px]" /><col /></colgroup>
            <thead>
              <tr className="bg-[#f5f5f5]">
                <ColumnHead className="border-r">ID</ColumnHead>
                <ColumnHead>Message</ColumnHead>
              </tr>
            </thead>
          </table>
        </div>
      </div>
      <nav className="flex h-[43px] pt-[3px] pb-[6px] pl-[17px]">
        {tabs.map((t) => (
          <button
            key={t.name}
            onClick={() => setTab(t.name)}
            className={`flex items-center gap-1 border-r border-[#c5c5c5] pl-[15px] first:pl-[6px] ${t.width} ${t.name === tab ? 'text-[#1a4789]' : ''}`}
          >
            {t.icon}
            <span className="whitespace-nowrap">{t.name}</span>
          </button>
        ))}
      </nav>
    </section>
  );
}

function PropertyGroup({ title, rows }) {
  return (
    <tbody>
      <tr className="bg-[#dadada]">
        <th colSpan={3} className="h-[25px] p-0 text-left text-[16px] font-bold text-[#1a4789]">
          <span className="flex items-center justify-between pr-[13px] pl-[22px] leading-[25px]">{title}<svg className="h-1 w-[7px]" viewBox="0 0 7 4"><path d="M0 4L3.500 0L7 4Z" fill="#6e6e6e" /></svg></span>
        </th>
      </tr>
      {rows.map((r) => (
        <tr key={r.name}>
          <td className="bg-[#dadada] p-0" />
          <th className={`h-[27px] border-t border-r border-[#d0d0d0] bg-[#f0f0f0] p-0 pl-[21px] text-left text-[16px] font-normal ${r.dim ? '' : 'text-black'}`}>{r.name}</th>
          <td className="border-t border-[#d0d0d0] bg-white p-0 pl-1 text-black">{r.value}</td>
        </tr>
      ))}
    </tbody>
  );
}

function Properties() {
  return (
    <aside className="mt-[2px] mr-[2px] mb-[2px] ml-1 flex w-[509px] shrink-0 flex-col border border-[#c5c5c5] px-[3px] pb-[3px]">
      <header className="flex h-[57px] items-center justify-between pr-[14px] pb-[2px] pl-[14px]">
        <h2 className="text-[21px] leading-[26px]">Properties</h2>
        <div className="flex items-center gap-3">
          <button aria-label="Pin"><Pin /></button>
          <button aria-label="Close"><Cross /></button>
        </div>
      </header>
      <div className="flex h-[33px] items-start pr-[9px] pl-[3px]">
        <button aria-label="Categorized" className="flex h-[30px] w-[30px] items-center justify-center bg-[#b0d6f0]">
          <svg className="h-[16px] w-[15px]" viewBox="0 0 15 16"><path d="M3 3H13V16H3Z" fill="#fff" /><path d="M3 2H14M3 9H14" stroke="#1b93e6" strokeWidth="2" /><path d="M5 5.500H11M5 7H11M5 12.500H11M5 14.500H11" stroke="#1b93e6" /><path d="M0 2L3 0V4ZM0 9L3 7V11Z" fill="#1d2c50" /></svg>
        </button>
        <button aria-label="Alphabetical" className="flex h-[30px] w-[30px] items-center justify-center">
          <svg className="h-[16px] w-[14px]" viewBox="0 0 14 16"><path d="M.7 7L3 1L5.300 7M1.500 5H4.500" fill="none" stroke="#4a5290" strokeWidth="1.500" /><path d="M.5 9.700H5L1 14.800H5.500" fill="none" stroke="#d0203c" strokeWidth="1.600" /><path d="M10.500 0V13" stroke="#27418a" strokeWidth="2" /><path d="M7.500 11.500H13.500L10.500 15.500Z" fill="#27418a" /></svg>
        </button>
        <button aria-label="Property pages" disabled className="flex h-[30px] w-[30px] items-center justify-center">
          <svg className="h-[14px] w-[13px]" viewBox="0 0 13 14"><rect width="13" height="14" fill="#a6a6a6" /><path d="M6 2H12V4.500H6ZM6 5.500H12V8.500H6ZM6 9.500H12V12H6Z" fill="#dcdcdc" /><path d="M1 2H4V4H1ZM1 6H4V8H1ZM1 10H4V12H1Z" fill="#c4c4c4" /></svg>
        </button>
        <div className="mx-[2px] mt-[3px] h-6 w-px bg-[#c5c5c5]" />
        <button aria-label="Show filter row" className="mr-[6px] ml-[5px] flex h-[30px] w-[30px] items-center justify-center bg-[#b0d6f0]"><ListFilter /></button>
        <FilterBox label="Filter properties" />
      </div>
      <div className="flex-1 border-2 border-[#c5c5c5] bg-[#9f9f9f]">
        <table className="w-full table-fixed border-separate border-spacing-0">
          <colgroup><col className="w-[17px]" /><col className="w-[232px]" /><col /></colgroup>
          <PropertyGroup title="Composition Component Type" rows={[{ name: 'Name', value: 'CtCoApplication' }, { name: 'Package', value: '/ComponentTypes' }]} />
          <PropertyGroup title="Port Prototypes" rows={[{ name: 'Port Prototype[...]', value: '', dim: true }]} />
        </table>
      </div>
      <div className="h-[158px] border-x border-b border-[#c5c5c5]" />
    </aside>
  );
}

export default function App() {
  return (
    <div className="flex min-h-screen flex-col bg-[#f5f5f5] font-['DejaVu_Sans_Condensed','Noto_Sans',sans-serif] text-[17px] leading-[22px] text-[#444]">
      <TitleBar />
      <Ribbon />
      <main className="flex flex-1">
        <div className="flex min-w-0 flex-1 flex-col">
          <Document />
          <Messages />
        </div>
        <Properties />
      </main>
      <footer className="flex h-[37px] items-center bg-[#1a4789] px-[10px] pt-[2px] text-white">Design Mode</footer>
    </div>
  );
}
